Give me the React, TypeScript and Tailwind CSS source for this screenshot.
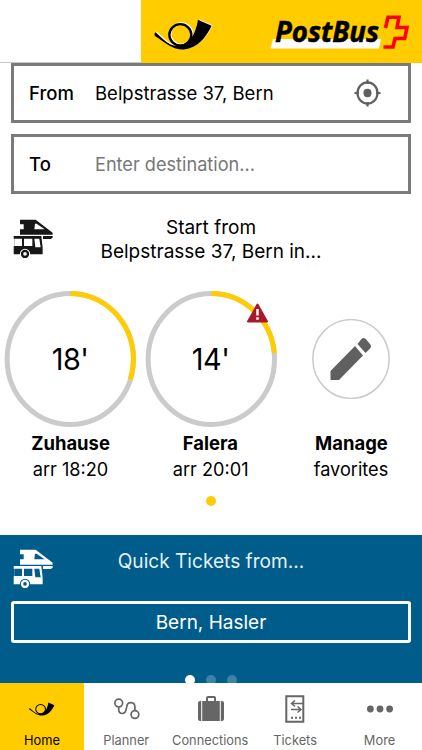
import type { ReactNode } from 'react';

function BusIcon({ ink, paper }: { ink: string; paper: string }) {
  return (
    <svg viewBox="39 42 120 119" className="h-[39.6px] w-10 shrink-0">
      <path fill={ink} d="M60 44H107L158 83V89H60V73H71V58H60Z" />
      <path fill={paper} d="M105 56H110L134 73H103Z" />
      <path fill={ink} d="M129 93H158V97L153 102H129Z" />
      <path fill={ink} d="M41 93H124L128 128V148H41V124H43V101H41Z" />
      <path fill={paper} d="M43 101H66V123H43ZM72 101H97V123H72ZM103 101H118L122 127H106Z" />
      <circle cx="75" cy="147" r="15.5" fill={paper} />
      <circle cx="75" cy="147" r="9" fill={paper} stroke={ink} strokeWidth="7" />
    </svg>
  );
}

function Horn({ shadow, className }: { shadow?: boolean; className: string }) {
  const body = (
    <>
      <path d="M42 98L45 95C65 113 82 133 105 136C140 136 163 112 172 58L213 76C195 112 172 143 130 147C95 148 82 132 42 106Z" />
      <ellipse cx="119" cy="103" rx="33" ry="32" fill="none" stroke="currentColor" strokeWidth="7" />
    </>
  );
  return (
    <svg viewBox="40 56 177 92" className={className} fill="currentColor">
      {shadow && <g className="text-white" transform="translate(3 -2)">{body}</g>}
      {body}
    </svg>
  );
}

function Ring({ minutes, arc }: { minutes: string; arc: string }) {
  return (
    <div className="grid h-[136px] w-[132px] place-items-center">
      <svg viewBox="0 0 132 136" className="col-start-1 row-start-1 h-full w-full" fill="none" strokeWidth="5">
        <ellipse cx="66.3" cy="68" rx="63.2" ry="65.5" stroke="#cbcbcb" />
        <path d={arc} stroke="#ffcc00" />
      </svg>
      <span className="col-start-1 row-start-1 scale-x-[.96] pt-px text-[30px] tracking-[-0.5px]">{minutes}</span>
    </div>
  );
}

function Favorite({ title, sub, children }: { title: string; sub: string; children: ReactNode }) {
  return (
    <div className="flex w-[140.5px] flex-col items-center whitespace-nowrap">
      <div className="flex h-[142px] items-center">{children}</div>
      <div className="h-[26px] scale-x-[.97] pt-px text-[19px] leading-[26px] font-bold">{title}</div>
      <div className="scale-x-[.98] text-[18.5px] leading-[26px]">{sub}</div>
    </div>
  );
}

function Tab({ label, active, children }: { label: string; active?: boolean; children: ReactNode }) {
  return (
    <div className={active ? 'flex min-w-0 flex-1 basis-0 flex-col items-center bg-[#ffcc00] text-black' : 'flex min-w-0 flex-1 basis-0 flex-col items-center text-[#666]'}>
      <div className="flex h-[48px] items-center pt-[3px]">{children}</div>
      <span className="scale-x-[.95] pr-px text-[13.5px] leading-[19px] whitespace-nowrap">{label}</span>
    </div>
  );
}

export default function App() {
  return (
    <div className="flex h-[750px] w-[422px] flex-col overflow-hidden bg-white font-['Inter',sans-serif] text-black">
      <header className="flex h-[63px] shrink-0 justify-end border-b border-[#c8c8c8]">
        <div className="flex h-[63px] w-[281px] bg-[#ffcc00] pl-[13px]">
          <Horn shadow className="mt-[18.5px] h-[31px] w-[59px]" />
          <svg viewBox="270 12 142 40" className="mt-3 ml-[57px] h-10 w-[142px]">
            <path fill="#fff" d="M273 39H381L379 48.5H270.5Z" />
            <text x="275" y="41.5" textLength="104" lengthAdjust="spacingAndGlyphs" fontFamily="Open Sans" fontWeight="700" fontStyle="italic" fontSize="29" stroke="#000" strokeWidth=".5">PostBus</text>
            <path fill="none" stroke="#f00" strokeWidth="3.6" d="M385.5 28L388 17.3H399L397 27.5H407L404.7 38.5H395L393 47H383.5" />
          </svg>
        </div>
      </header>

      <section className="flex shrink-0 flex-col gap-[11px] px-[11px] text-[18.5px] whitespace-nowrap">
        <div className="flex h-[60px] items-center border-3 border-[#7a7a7a] pr-[27px] pl-[15px]">
          <span className="w-[66px] pt-[2px] font-medium">From</span>
          <span className="flex-1 pt-[2px]">Belpstrasse 37, Bern</span>
          <svg viewBox="0 0 27 28" className="h-7 w-[27px]" fill="none" stroke="#606060" strokeWidth="2.2">
            <ellipse cx="13.5" cy="14" rx="10" ry="10.6" />
            <ellipse cx="13.5" cy="14" rx="4" ry="4.2" fill="#606060" stroke="none" />
            <path d="M13.5 .5V5M13.5 23V27.5M.5 14H5M22 14H26.5" />
          </svg>
        </div>
        <div className="flex h-[60px] items-center border-3 border-[#7a7a7a] pt-[2px] pl-[15px]">
          <span className="w-[66px] font-medium">To</span>
          <span className="origin-left scale-x-[.98] text-[#777]">Enter destination...</span>
        </div>
      </section>

      <section className="flex h-[94px] shrink-0 px-[13px] pt-[21px]">
        <div className="pt-[4px]"><BusIcon ink="#171717" paper="#fff" /></div>
        <h2 className="flex-1 pt-px pr-10 text-center text-[19px] leading-6 whitespace-nowrap">
          Start from<br />Belpstrasse 37, Bern in...
        </h2>
      </section>

      <section className="flex h-[247px] shrink-0 flex-col items-center">
        <div className="flex w-[422px]">
          <Favorite title="Zuhause" sub="arr 18:20">
            <Ring minutes="18'" arc="M66.3 2.5A63.2 65.5 0 0 1 126.3 88.5" />
          </Favorite>
          <Favorite title="Falera" sub="arr 20:01">
            <div className="relative">
              <Ring minutes="14'" arc="M66.3 2.5A63.2 65.5 0 0 1 129.3 62" />
              <svg viewBox="0 0 21 20" className="absolute top-[12px] left-[102.5px] h-5 w-[21px]">
                <path fill="#a51b2b" stroke="#a51b2b" strokeWidth="2" strokeLinejoin="round" d="M10.5 1.5L20 18.5H1Z" />
                <path stroke="#fff" strokeWidth="2.5" d="M10.5 6V12.5M10.5 14.2V16.8" />
              </svg>
            </div>
          </Favorite>
          <Favorite title="Manage" sub="favorites">
            <svg viewBox="0 0 78 80" className="h-20 w-[78px]">
              <ellipse cx="39" cy="40" rx="38.2" ry="39.4" fill="#fff" stroke="#cbcbcb" strokeWidth="1.5" />
              <path fill="#606060" d="M18.5 52V61H27L51 36.5L43 27ZM45.5 25L53.5 34L58 29.5Q60 27.5 58 25L53.5 19.8Q51.5 18 49.5 20Z" />
            </svg>
          </Favorite>
        </div>
        <div className="mt-[14px] h-[10px] w-[10px] rounded-full bg-[#ffcc00]" />
      </section>

      <section className="flex h-[148px] shrink-0 flex-col overflow-hidden bg-[#005c8a] px-[11px] text-white">
        <div className="flex h-[66px] shrink-0 pt-[14px] pl-[2px]">
          <BusIcon ink="#fff" paper="#005c8a" />
          <h2 className="flex-1 scale-x-[.955] pr-[44px] text-center text-[20px] leading-6 whitespace-nowrap text-[#e4f1f7]">Quick Tickets from...</h2>
        </div>
        <div className="flex h-[42px] shrink-0 items-center justify-center rounded-[3px] border-3 border-white text-[19px]">
          <span className="pt-[3px]">Bern, Hasler</span>
        </div>
        <div className="mt-[32px] flex shrink-0 justify-center gap-[11.5px]">
          <i className="h-[10px] w-[9.5px] rounded-full bg-white" />
          <i className="h-[10px] w-[9.5px] rounded-full bg-[#3c83a8]" />
          <i className="h-[10px] w-[9.5px] rounded-full bg-[#3c83a8]" />
        </div>
      </section>

      <nav className="flex h-[67px] shrink-0">
        <Tab label="Home" active><Horn className="h-[14px] w-[26px]" /></Tab>
        <Tab label="Planner">
          <svg viewBox="340 84 77 65" className="h-[22px] w-[26px]" fill="none" stroke="currentColor" strokeWidth="5">
            <circle cx="354" cy="99" r="11.5" /><circle cx="402" cy="133" r="11.5" />
            <path d="M354 111V117C354 134 374 134 376 117L378 109C380 93 402 94 402 112V121" />
          </svg>
        </Tab>
        <Tab label="Connections">
          <svg viewBox="0 0 26 27" className="h-[27px] w-[26px]" fill="currentColor">
            <path d="M0 8Q0 6 2 6H3.2V26H2Q0 26 0 24ZM4.2 6H8V3Q8 1 10 1H16Q18 1 18 3V6H21.8V26H4.2ZM10 3V6H16V3ZM22.8 6H24Q26 6 26 8V24Q26 26 24 26H22.8Z" fillRule="evenodd" />
          </svg>
        </Tab>
        <Tab label="Tickets">
          <svg viewBox="0 0 20 28" className="h-7 w-5" fill="none" stroke="currentColor" strokeWidth="2">
            <path d="M1.3 1.3H18.3V26.7H1.3Z" />
            <path strokeWidth="1.5" d="M18 8.5H7M10 5.5L6.5 8.5L10 11.5M6 14.5H16M12.5 11.5L16 14.5L12.5 17.5" />
            <path strokeDasharray="2 2" d="M6 22.8H16" />
          </svg>
        </Tab>
        <Tab label="More">
          <svg viewBox="0 0 26 8" className="h-2 w-[26px]" fill="currentColor">
            <circle cx="3.4" cy="4" r="3.4" /><circle cx="13" cy="4" r="3.4" /><circle cx="22.6" cy="4" r="3.4" />
          </svg>
        </Tab>
      </nav>
    </div>
  );
}
